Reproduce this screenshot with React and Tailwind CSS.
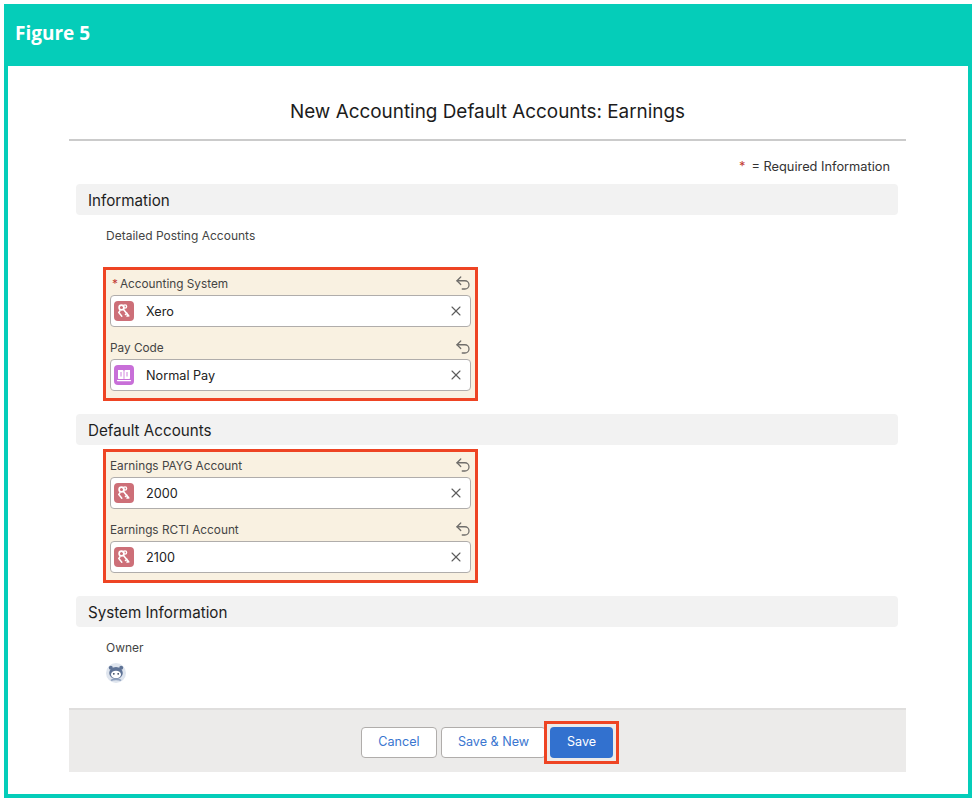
import { Undo2, X } from 'lucide-react';

const KeysIcon = () => (
  <svg viewBox="0 0 20 20" className="w-[20px] h-[20px]">
    <circle cx="7.500" cy="6.500" r="2.400" fill="none" stroke="#fff" strokeWidth="1.700" />
    <circle cx="11" cy="5.500" r="1.600" fill="none" stroke="#fff" strokeWidth="1.400" />
    <path d="M9.500 8.500l5.300 6.500M13 12.300l-1.500 1.200M14.300 14l-1.300 1.100" stroke="#fff" strokeWidth="1.600" strokeLinecap="round" fill="none" />
    <path d="M6 9.800l-1.200 1.600 3 3.800" stroke="#fff" strokeWidth="1.500" strokeLinecap="round" fill="none" />
  </svg>
);

const BookIcon = () => (
  <svg viewBox="0 0 20 20" className="w-[20px] h-[20px]">
    <path d="M4 5h4.700c.6 0 .9.400.900 1v8H5c-.6 0-1-.400-1-1z" fill="#fff" />
    <path d="M16 5h-4.700c-.6 0-.9.400-.9 1v8H15c.6 0 1-.400 1-1z" fill="#fff" />
    <path d="M3.500 15.600h13" stroke="#fff" strokeWidth="1.200" strokeLinecap="round" />
    <path d="M7 7v4.500M13 7v4.500" stroke="#c86fd8" strokeWidth="0.900" />
  </svg>
);

const OwnerAvatar = () => (
  <svg viewBox="0 0 20 20" className="w-[20px] h-[20px]">
    <circle cx="10" cy="10" r="10" fill="#dfe5ee" />
    <circle cx="4.800" cy="4.800" r="2" fill="#5f7396" />
    <circle cx="15.200" cy="4.800" r="2" fill="#5f7396" />
    <ellipse cx="10" cy="10" rx="6.800" ry="6" fill="#5f7396" />
    <ellipse cx="10" cy="11.500" rx="5" ry="3.800" fill="#fff" />
    <circle cx="7.800" cy="10.800" r="0.900" fill="#33415c" />
    <circle cx="12.200" cy="10.800" r="0.900" fill="#33415c" />
    <path d="M5 17.500c1.500-1.500 8.500-1.500 10 0" stroke="#8ea0bd" strokeWidth="1.600" fill="none" />
  </svg>
);

const Field = ({ label, required, value, icon, iconBg, className }) => (
  <div className={className}>
    <div className="flex items-center justify-between h-[17px] text-[11.8px] leading-[17px] text-[#444]">
      <span className={required ? 'pl-[2px]' : ''}>
        {required && <span className="text-[#c23934] mr-[2px]">*</span>}
        {label}
      </span>
      <Undo2 className="w-[18px] h-[18px] -mt-[3px] -mr-[1px] text-[#706e6b]" strokeWidth={1.7} />
    </div>
    <div className="mt-[2px] h-[32px] flex items-center bg-white border border-[#b0adab] rounded-[4px] pl-[3px] pr-[6px]">
      <span className={`w-[20px] h-[20px] rounded-[4px] flex items-center justify-center ${iconBg}`}>{icon}</span>
      <span className="ml-[12px] pt-[1px] flex-1 text-[12.7px] text-[#222]">{value}</span>
      <X className="w-[16px] h-[16px] text-[#5c5c5c]" strokeWidth={1.6} />
    </div>
  </div>
);

const SectionTitle = ({ children, className }) => (
  <div className={`h-[31px] ml-[7px] mr-[8px] px-[12px] pt-[3px] flex items-center rounded-[4px] bg-[#f2f2f2] text-[15.2px] text-[#1f1f1f] ${className}`}>
    {children}
  </div>
);

const HighlightGroup = ({ children, className }) => (
  <div className={`w-[375px] h-[134px] ml-[34px] border-[3px] border-[#ee4423] bg-[#f9f1e1] px-[4px] pt-[6px] ${className}`}>
    {children}
  </div>
);

export default function App() {
  return (
    <div className="w-[976px] h-[802px] bg-white p-[4px] font-['Inter','Liberation_Sans',sans-serif]">
      <div className="h-[794px] border-[4px] border-t-0 border-[#05cdb9] flex flex-col">
        <div className="h-[62px] -mx-[4px] px-[11px] pb-[4px] bg-[#05cdb9] flex items-center text-white font-bold text-[19px] font-['Open_Sans','Liberation_Sans',sans-serif]">
          Figure 5
        </div>

        <div className="w-[837px] ml-[61px] flex-1 flex flex-col">
          <h1 className="h-[75px] pt-[19px] border-b-2 border-[#cbcbcb] flex items-center justify-center text-[18.9px] font-normal text-[#1c1c1c]">
            New Accounting Default Accounts: Earnings
          </h1>
          <div className="h-[43px] pt-[8px] pr-[16px] flex items-center justify-end text-[12.8px] text-[#333]">
            <span className="text-[#c23934] mr-[6px]">*</span>= Required Information
          </div>

          <SectionTitle>Information</SectionTitle>
          <div className="ml-[37px] mt-[13px] h-[15px] text-[12px] leading-[15px] text-[#444]">Detailed Posting Accounts</div>
          <HighlightGroup className="mt-[24px]">
            <Field required label="Accounting System" value="Xero" icon={<KeysIcon />} iconBg="bg-[#cd6f78]" />
            <Field className="mt-[13px]" label="Pay Code" value="Normal Pay" icon={<BookIcon />} iconBg="bg-[#c86fd8]" />
          </HighlightGroup>

          <SectionTitle className="mt-[13px]">Default Accounts</SectionTitle>
          <HighlightGroup className="mt-[4px]">
            <Field label="Earnings PAYG Account" value="2000" icon={<KeysIcon />} iconBg="bg-[#cd6f78]" />
            <Field className="mt-[13px]" label="Earnings RCTI Account" value="2100" icon={<KeysIcon />} iconBg="bg-[#cd6f78]" />
          </HighlightGroup>

          <SectionTitle className="mt-[13px]">System Information</SectionTitle>
          <div className="ml-[37px] mt-[13px] h-[15px] text-[12px] leading-[15px] text-[#444]">Owner</div>
          <div className="ml-[37px] mt-[8px]"><OwnerAvatar /></div>

          <div className="mt-[25px] h-[64px] pt-[2px] border-t-2 border-[#dfdedd] bg-[#ecebea] flex items-center justify-center pl-[5px] text-[12.6px]">
            <button className="w-[76px] h-[31px] bg-white border border-[#b0adab] rounded-[4px] text-[#3a76d0]">Cancel</button>
            <button className="w-[105px] h-[31px] ml-[4px] bg-white border border-[#b0adab] rounded-[4px] text-[#3a76d0]">Save &amp; New</button>
            <div className="-ml-[2px] border-[3px] border-[#ee4423] p-[3px]">
              <button className="block w-[63px] h-[31px] bg-[#3271cf] rounded-[4px] text-white">Save</button>
            </div>
          </div>
        </div>
      </div>
    </div>
  );
}
